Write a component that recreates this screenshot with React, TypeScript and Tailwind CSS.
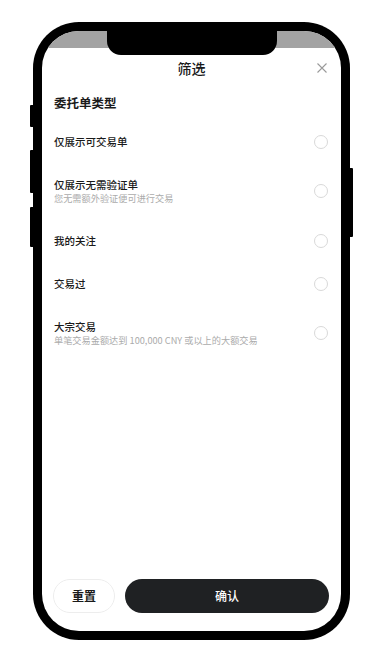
import React from "react";

const items: { title: string; sub?: string }[] = [
  { title: "仅展示可交易单" },
  { title: "仅展示无需验证单", sub: "您无需额外验证便可进行交易" },
  { title: "我的关注" },
  { title: "交易过" },
  { title: "大宗交易", sub: "单笔交易金额达到 100,000 CNY 或以上的大额交易" },
];

export default function App() {
  return (
    <div
      className="w-[390px] h-[671px] bg-white pt-[22px] pl-[33px] overflow-hidden"
      style={{ fontFamily: '"Noto Sans CJK SC", "Noto Sans", sans-serif' }}
    >
      <div className="relative w-[317px] h-[618px]">
        {/* side buttons */}
        <div className="absolute left-[-3px] top-[83px] w-[3px] h-[22px] bg-black rounded-l-[1px]" />
        <div className="absolute left-[-3px] top-[128px] w-[3px] h-[43px] bg-black rounded-l-[1px]" />
        <div className="absolute left-[-3px] top-[185px] w-[3px] h-[40px] bg-black rounded-l-[1px]" />
        <div className="absolute right-[-3px] top-[146px] w-[3px] h-[69px] bg-black rounded-r-[1px]" />

        <div className="w-full h-full rounded-[46px] bg-black p-[9px]">
          <div className="relative w-full h-full rounded-[37px] overflow-hidden bg-white flex flex-col">
            {/* notch */}
            <div className="absolute left-1/2 -translate-x-1/2 top-0 w-[170px] h-[24px] bg-black rounded-b-[14px] z-10" />

            <div className="h-[17px] bg-[#a3a3a3] shrink-0" />

            {/* header */}
            <div className="h-[40px] flex items-center justify-between px-[14px] shrink-0">
              <div className="w-[10px]" />
              <div className="text-[14px] leading-[18px] font-medium text-[#1a1a1a]">筛选</div>
              <svg width="10" height="10" viewBox="0 0 10 10" fill="none">
                <path d="M0.5 0.5L9.5 9.5M9.5 0.5L0.5 9.5" stroke="#9a9a9a" strokeWidth="1.1" />
              </svg>
            </div>

            <div className="pl-[12px] pt-[6px] pb-[8px] text-[12.5px] leading-[18px] font-bold text-[#1a1a1a]">
              委托单类型
            </div>

            <div className="flex flex-col">
              {items.map((it) => (
                <div key={it.title} className="flex items-center justify-between pl-[12px] pr-[13px] py-[14px]">
                  <div className="flex flex-col">
                    <div className="text-[10.5px] leading-[15px] font-medium text-[#1a1a1a]">{it.title}</div>
                    {it.sub && (
                      <div className="text-[9.2px] leading-[13px] text-[#ababab]">{it.sub}</div>
                    )}
                  </div>
                  <div className="w-[14px] h-[14px] rounded-full border border-[#d9d9d9] shrink-0" />
                </div>
              ))}
            </div>

            <div className="flex-1" />

            <div className="flex gap-[10px] pl-[11px] pr-[12px] pb-[18px] shrink-0">
              <button className="w-[62px] h-[34px] rounded-full border border-[#ededed] bg-white text-[12px] font-bold text-[#1a1a1a]">
                重置
              </button>
              <button className="flex-1 h-[34px] rounded-full bg-[#1f2123] text-[12px] font-medium text-white">
                确认
              </button>
            </div>
          </div>
        </div>
      </div>
    </div>
  );
}
